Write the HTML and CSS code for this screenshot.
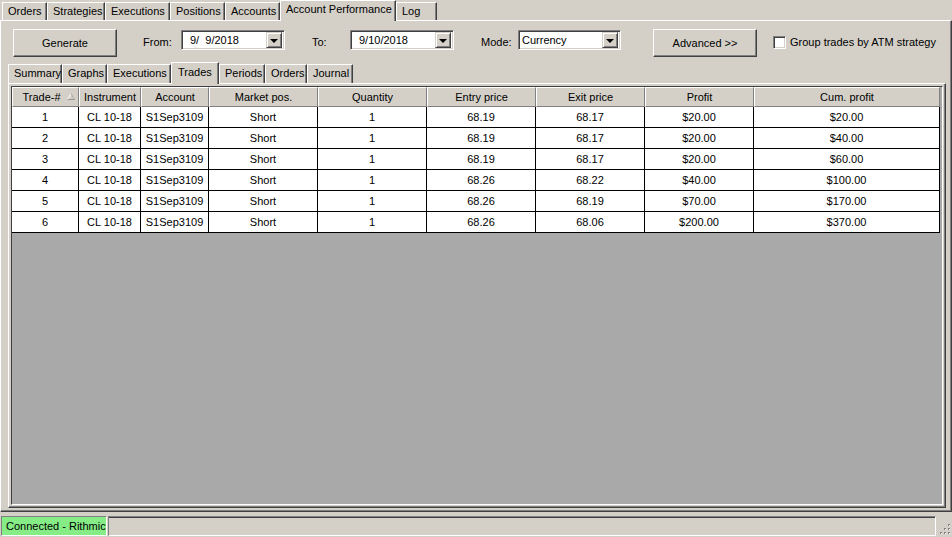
FILE: index.html
```html
<!DOCTYPE html>
<html>
<head>
<meta charset="utf-8">
<title>Account Performance</title>
<link rel="stylesheet" href="styles.css">
</head>
<body>
<div class="app">
  <div class="tabs top-tabs">
    <div class="tab w-orders">Orders</div>
    <div class="tab w-strat">Strategies</div>
    <div class="tab w-exec">Executions</div>
    <div class="tab w-pos">Positions</div>
    <div class="tab w-acc">Accounts</div>
    <div class="tab active w-perf">Account Performance</div>
    <div class="tab w-log">Log</div>
  </div>
  <div class="page">
    <div class="toolbar">
      <button class="btn btn-gen">Generate</button>
      <span class="lbl lbl-from">From:</span>
      <div class="combo combo-date"><span class="combo-text">9/  9/2018</span><span class="drop"><i></i></span></div>
      <span class="lbl lbl-to">To:</span>
      <div class="combo combo-date"><span class="combo-text">9/10/2018</span><span class="drop"><i></i></span></div>
      <span class="lbl lbl-mode">Mode:</span>
      <div class="combo combo-mode"><span class="combo-text">Currency</span><span class="drop"><i></i></span></div>
      <button class="btn btn-adv">Advanced &gt;&gt;</button>
      <span class="check"></span>
      <span class="check-lbl">Group trades by ATM strategy</span>
    </div>
    <div class="tabs sub-tabs">
      <div class="tab s-sum">Summary</div>
      <div class="tab s-gra">Graphs</div>
      <div class="tab s-exe">Executions</div>
      <div class="tab active s-tra">Trades</div>
      <div class="tab s-per">Periods</div>
      <div class="tab s-ord">Orders</div>
      <div class="tab s-jou">Journal</div>
    </div>
    <div class="subpage">
      <div class="grid">
        <table class="trades">
          <thead>
            <tr>
              <th class="c1 sorted">Trade-#<svg class="sort" width="8" height="7" viewBox="0 0 8 7"><path d="M0.5 6.5 L4 0.5 L7.5 6.5 Z" fill="none" stroke="#fff" stroke-width="1"/><path d="M0.5 6.5 L7.5 6.5 L4 0.5" fill="none" stroke="#9a968e" stroke-width="1"/></svg></th>
              <th class="c2">Instrument</th>
              <th class="c3">Account</th>
              <th class="c4">Market pos.</th>
              <th class="c5">Quantity</th>
              <th class="c6">Entry price</th>
              <th class="c7">Exit price</th>
              <th class="c8">Profit</th>
              <th class="c9">Cum. profit</th>
            </tr>
          </thead>
          <tbody>
            <tr><td>1</td><td>CL 10-18</td><td>S1Sep3109</td><td>Short</td><td>1</td><td>68.19</td><td>68.17</td><td>$20.00</td><td>$20.00</td></tr>
            <tr><td>2</td><td>CL 10-18</td><td>S1Sep3109</td><td>Short</td><td>1</td><td>68.19</td><td>68.17</td><td>$20.00</td><td>$40.00</td></tr>
            <tr><td>3</td><td>CL 10-18</td><td>S1Sep3109</td><td>Short</td><td>1</td><td>68.19</td><td>68.17</td><td>$20.00</td><td>$60.00</td></tr>
            <tr><td>4</td><td>CL 10-18</td><td>S1Sep3109</td><td>Short</td><td>1</td><td>68.26</td><td>68.22</td><td>$40.00</td><td>$100.00</td></tr>
            <tr><td>5</td><td>CL 10-18</td><td>S1Sep3109</td><td>Short</td><td>1</td><td>68.26</td><td>68.19</td><td>$70.00</td><td>$170.00</td></tr>
            <tr><td>6</td><td>CL 10-18</td><td>S1Sep3109</td><td>Short</td><td>1</td><td>68.26</td><td>68.06</td><td>$200.00</td><td>$370.00</td></tr>
          </tbody>
        </table>
      </div>
    </div>
  </div>
  <div class="status">
    <div class="panel conn">Connected - Rithmic</div>
    <div class="panel rest"></div>
    <svg class="grip" width="12" height="12" viewBox="0 0 12 12">
      <g fill="#808080"><rect x="9" y="1" width="2" height="2"/><rect x="5" y="5" width="2" height="2"/><rect x="9" y="5" width="2" height="2"/><rect x="1" y="9" width="2" height="2"/><rect x="5" y="9" width="2" height="2"/><rect x="9" y="9" width="2" height="2"/></g>
      <g fill="#fff"><rect x="10" y="2" width="1" height="1"/><rect x="6" y="6" width="1" height="1"/><rect x="10" y="6" width="1" height="1"/><rect x="2" y="10" width="1" height="1"/><rect x="6" y="10" width="1" height="1"/><rect x="10" y="10" width="1" height="1"/></g>
    </svg>
  </div>
</div>
</body>
</html>
```

FILE: styles.css
```css
* { box-sizing: border-box; }
html, body { margin: 0; padding: 0; }
body {
  background: #d4d0c8;
  font-family: "Liberation Sans", Arial, sans-serif;
  font-size: 11px;
  color: #000;
  width: 952px;
  height: 537px;
  overflow: hidden;
}
.app { display: flex; flex-direction: column; height: 537px; }

/* ---------- tabs ---------- */
.tabs { display: flex; align-items: flex-end; }
.tab {
  height: 18px;
  line-height: 16px;
  padding-left: 5px;
  white-space: nowrap;
  border-top: 1px solid #fff;
  border-left: 1px solid #fff;
  border-right: 1px solid #404040;
  box-shadow: inset -1px 0 0 #808080;
  background: #d4d0c8;
}
.tab.active {
  height: 21px;
  line-height: 16px;
  margin-bottom: -1px;
  position: relative;
  z-index: 2;
}
.top-tabs { height: 20px; padding-left: 2px; }
.w-orders { width: 45px; }
.w-strat { width: 58px; }
.w-exec { width: 65px; }
.w-pos { width: 55px; }
.w-acc { width: 55px; }
.w-perf { width: 116px; }
.w-log { width: 41px; }

.sub-tabs { height: 21px; margin-left: 7px; position: relative; z-index: 2; }
.sub-tabs .tab { height: 19px; line-height: 17px; }
.sub-tabs .tab.active { height: 22px; line-height: 18px; padding-left: 6px; }
.s-sum { width: 54px; }
.s-gra { width: 45px; }
.s-exe { width: 64px; }
.s-tra { width: 48px; }
.s-per { width: 46px; }
.s-ord { width: 42px; }
.s-jou { width: 46px; }

/* ---------- page ---------- */
.page {
  height: 492px;
  display: flex;
  flex-direction: column;
  border-top: 1px solid #fff;
  border-left: 1px solid #fff;
  border-right: 1px solid #404040;
  border-bottom: 1px solid #404040;
  box-shadow: inset -1px -1px 0 #808080;
}

.toolbar {
  height: 41px;
  display: flex;
  align-items: flex-start;
  padding: 8px 0 0 12px;
}
.btn {
  font: inherit;
  color: #000;
  background: #d4d0c8;
  height: 28px;
  width: 104px;
  padding: 0;
  border: 1px solid;
  border-color: #fff #404040 #404040 #fff;
  box-shadow: inset -1px -1px 0 #808080, inset 1px 1px 0 #d4d0c8;
  text-align: center;
}
.lbl { height: 27px; line-height: 27px; }
.lbl-from { margin-left: 26px; width: 38px; }
.lbl-to { margin-left: 27px; width: 38px; }
.lbl-mode { margin-left: 27px; width: 37px; }

.combo {
  height: 20px;
  margin-top: 1px;
  background: #fff;
  border: 1px solid;
  border-color: #808080 #fff #fff #808080;
  box-shadow: inset 1px 1px 0 #404040, inset -1px -1px 0 #d4d0c8;
  display: flex;
  align-items: center;
  justify-content: space-between;
  padding: 2px 2px 2px 8px;
}
.combo-date { width: 104px; }
.combo-mode { width: 103px; padding-left: 3px; }
.combo-text { white-space: pre; line-height: 16px; }
.drop {
  width: 16px;
  height: 16px;
  background: #d4d0c8;
  border: 1px solid;
  border-color: #d4d0c8 #404040 #404040 #d4d0c8;
  box-shadow: inset 1px 1px 0 #fff, inset -1px -1px 0 #808080;
  display: flex;
  align-items: center;
  justify-content: center;
}
.drop i {
  display: block;
  width: 0;
  height: 0;
  border-left: 4px solid transparent;
  border-right: 4px solid transparent;
  border-top: 4px solid #000;
  margin-top: 1px;
}
.btn-adv { margin-left: 32px; }
.check {
  width: 13px;
  height: 13px;
  margin: 7px 0 0 16px;
  background: #fff;
  border: 1px solid;
  border-color: #808080 #fff #fff #808080;
  box-shadow: inset 1px 1px 0 #404040, inset -1px -1px 0 #d4d0c8;
}
.check-lbl { margin-left: 4px; height: 27px; line-height: 27px; }

/* ---------- sub page + grid ---------- */
.subpage {
  flex: 1;
  margin: 0 5px 3px 7px;
  padding: 2px;
  border: 1px solid;
  border-color: #fff #404040 #404040 #fff;
  box-shadow: inset -1px -1px 0 #808080;
  display: flex;
}
.grid {
  flex: 1;
  background: #a9a9a9;
  border: 1px solid;
  border-color: #404040 #fff #fff #404040;
  box-shadow: 1px 1px 0 #d4d0c8;
  overflow: hidden;
}
.trades {
  table-layout: fixed;
  border-collapse: separate;
  border-spacing: 0;
  width: 928px;
}
.trades th {
  height: 20px;
  padding: 0;
  font-weight: normal;
  text-align: center;
  background: #d4d0c8;
  border-top: 1px solid #fff;
  border-left: 1px solid #fff;
  border-right: 1px solid #808080;
  border-bottom: 1px solid #808080;
  white-space: nowrap;
}
.trades th.sorted { position: relative; padding-right: 8px; }
.sort { position: absolute; right: 3px; top: 5px; }
.c1 { width: 67px; }
.c2 { width: 62px; }
.c3 { width: 68px; }
.c4, .c5, .c6, .c7, .c8 { width: 109px; }
.c9 { width: 186px; }
.trades td {
  height: 21px;
  padding: 0;
  line-height: 20px;
  text-align: center;
  background: #fff;
  border-right: 1px solid #000;
  border-bottom: 1px solid #000;
  white-space: nowrap;
}

/* ---------- status bar ---------- */
.status {
  flex: 1;
  display: flex;
  align-items: flex-start;
  padding: 4px 1px 0 1px;
}
.panel {
  height: 20px;
  border: 1px solid;
  border-color: #808080 #fff #fff #808080;
  line-height: 18px;
}
.conn {
  width: 106px;
  background: #86ec86;
  padding-left: 4px;
  white-space: nowrap;
}
.rest {
  width: 828px;
  margin-left: 1px;
  box-shadow: inset 0 1px 0 #404040;
}
.grip { margin: 7px 0 0 3px; }
```
